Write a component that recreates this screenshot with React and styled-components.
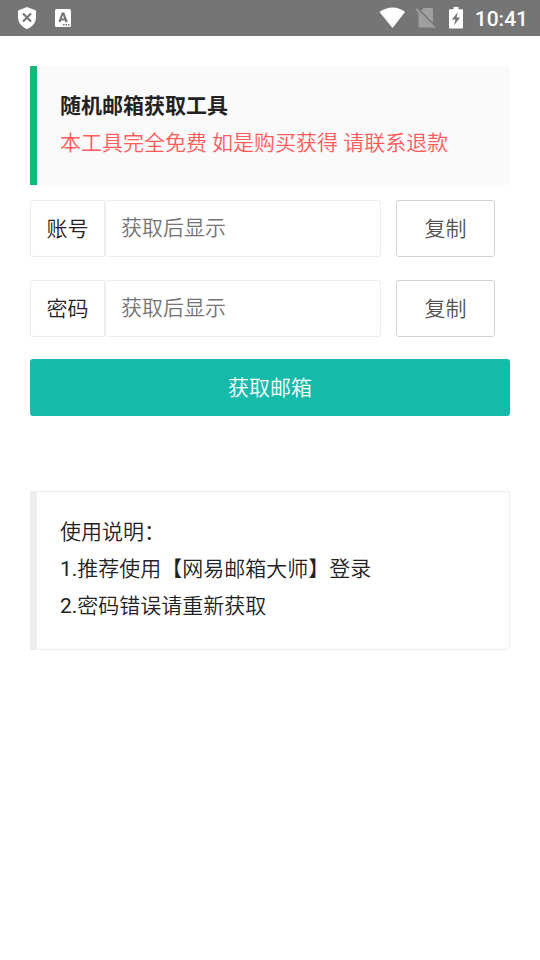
import React, { useState } from 'react';
import styled, { createGlobalStyle } from 'styled-components';

const GlobalStyle = createGlobalStyle`
  * {
    box-sizing: border-box;
  }

  body {
    margin: 0;
    background: #fff;
    color: #222;
    font-family: Roboto, "Noto Sans CJK SC", sans-serif;
    font-size: 21px;
    font-weight: 350;
    line-height: 37px;
  }

  button,
  input {
    font: inherit;
  }
`;

const StatusBar = styled.header`
  display: flex;
  align-items: center;
  justify-content: space-between;
  height: 36px;
  padding: 0 12px 0 16px;
  background: #757575;
  color: #fff;
`;

const StatusGroup = styled.div`
  display: flex;
  align-items: center;
  gap: ${({ $gap }) => $gap}px;
`;

const StatusIcon = styled.svg`
  display: block;
  flex: none;
`;

const Clock = styled.time`
  padding-top: 2px;
  font-weight: 500;
`;

const Page = styled.main`
  padding: 30px;
`;

const Quote = styled.blockquote`
  margin: 0 0 15px;
  padding: 22px 23px 23px;
  border-left: 7px solid #16b777;
  border-radius: 0 3px 3px 0;
  background: #fafafa;
`;

const Title = styled.h1`
  margin: 0;
  font-size: 21px;
  font-weight: 700;
`;

const Notice = styled.p`
  margin: 0;
  color: #ff5b5b;
`;

const Row = styled.div`
  display: flex;
  height: 57px;
  margin-bottom: ${({ $gap }) => $gap}px;
  padding-right: 15px;
`;

const Label = styled.label`
  flex: none;
  width: 75px;
  padding: 10px 0 8px;
  border: 1px solid #eee;
  border-radius: 3px 0 0 3px;
  text-align: center;
`;

const Field = styled.input`
  flex: 1;
  min-width: 0;
  margin-right: 15px;
  padding: 0 15px;
  border: 1px solid #eee;
  border-radius: 3px;
  background: #fff;
  color: #222;

  &::placeholder {
    color: #757575;
    opacity: 1;
  }
`;

const CopyButton = styled.button`
  flex: none;
  width: 99px;
  padding: 1px 0 0;
  border: 1px solid #d2d2d2;
  border-radius: 3px;
  background: #fff;
  color: #555;
`;

const FetchButton = styled.button`
  display: block;
  width: 100%;
  height: 57px;
  padding: 1px 0 0;
  border: 0;
  border-radius: 3px;
  background: #16baaa;
  color: #fff;
`;

const Notes = styled.section`
  margin-top: 75px;
  padding: 22px 23px 24px;
  border: 1px solid #eee;
  border-left-width: 7px;
  border-radius: 0 3px 3px 0;
`;

const Line = styled.p`
  margin: 0;
`;

const StepNumber = styled.span`
  font-weight: 400;
`;

const ShieldIcon = () => (
  <StatusIcon width="22" height="24" viewBox="0 0 22 24" aria-hidden="true">
    <path fill="#fff" d="M11 1 20 4.500V11c0 5.500-3.500 10-9 12C5.500 21 2 16.500 2 11V4.500z" />
    <path stroke="#757575" strokeWidth="2.200" d="m7 7.500 8 8m0-8-8 8" />
  </StatusIcon>
);

const KeyboardIcon = () => (
  <StatusIcon width="18" height="20" viewBox="0 0 18 20" aria-hidden="true">
    <rect x="1" y="1" width="16" height="18" rx="1.500" fill="#fff" />
    <path fill="none" stroke="#757575" strokeWidth="2.200" d="M5.500 14 8.500 5.500h1L12.700 14M6.500 11.500h5" />
    <path fill="#757575" d="M9 16h1.500v1.500H9zm2.500 0H13v1.500h-1.500zm2.500 0h1.500v1.500H14z" />
  </StatusIcon>
);

const WifiIcon = () => (
  <StatusIcon width="26" height="22" viewBox="0 0 26 22" aria-hidden="true">
    <path fill="#fff" d="M13.500 21 .500 5C4.500 2 9 .500 13.500 .500S22.500 2 26 5z" />
  </StatusIcon>
);

const NoSimIcon = () => (
  <StatusIcon width="22" height="22" viewBox="0 0 22 22" aria-hidden="true">
    <path fill="#a0a0a0" d="M8.500 1H16.500a1.500 1.500 0 0 1 1.500 1.500v13.300L6 3.500zM3.500 5.500 18 20.200 17.500 20.500H5A1.500 1.500 0 0 1 3.500 19z" />
    <path stroke="#a0a0a0" strokeWidth="1.800" d="m1 1.800 18.600 18.800" />
  </StatusIcon>
);

const BatteryIcon = () => (
  <StatusIcon width="18" height="22" viewBox="0 0 18 22" aria-hidden="true">
    <path fill="#fff" d="M6.500 0h5v2.200H15a1 1 0 0 1 1 1V20.500a1 1 0 0 1-1 1H3a1 1 0 0 1-1-1V3.200a1 1 0 0 1 1-1h3.500z" />
    <path fill="#757575" d="M10.800 5 5 12.500h3.500L7 18.500l6-8H9.500z" />
  </StatusIcon>
);

const CopyRow = ({ id, label, value, gap }) => (
  <Row $gap={gap}>
    <Label htmlFor={id}>{label}</Label>
    <Field id={id} type="text" placeholder="获取后显示" value={value} readOnly />
    <CopyButton type="button" onClick={() => navigator.clipboard?.writeText(value)}>
      复制
    </CopyButton>
  </Row>
);

const App = () => {
  const [account] = useState('');
  const [password] = useState('');

  return (
    <>
      <GlobalStyle />
      <StatusBar>
        <StatusGroup $gap={16}>
          <ShieldIcon />
          <KeyboardIcon />
        </StatusGroup>
        <StatusGroup $gap={10}>
          <WifiIcon />
          <NoSimIcon />
          <BatteryIcon />
          <Clock>10:41</Clock>
        </StatusGroup>
      </StatusBar>
      <Page>
        <Quote>
          <Title>随机邮箱获取工具</Title>
          <Notice>本工具完全免费 如是购买获得 请联系退款</Notice>
        </Quote>
        <CopyRow id="account" label="账号" value={account} gap={23} />
        <CopyRow id="password" label="密码" value={password} gap={22} />
        <FetchButton type="button">获取邮箱</FetchButton>
        <Notes>
          <Line>使用说明：</Line>
          <Line>
            <StepNumber>1.</StepNumber>
            推荐使用【网易邮箱大师】登录
          </Line>
          <Line>
            <StepNumber>2.</StepNumber>
            密码错误请重新获取
          </Line>
        </Notes>
      </Page>
    </>
  );
};

export default App;
